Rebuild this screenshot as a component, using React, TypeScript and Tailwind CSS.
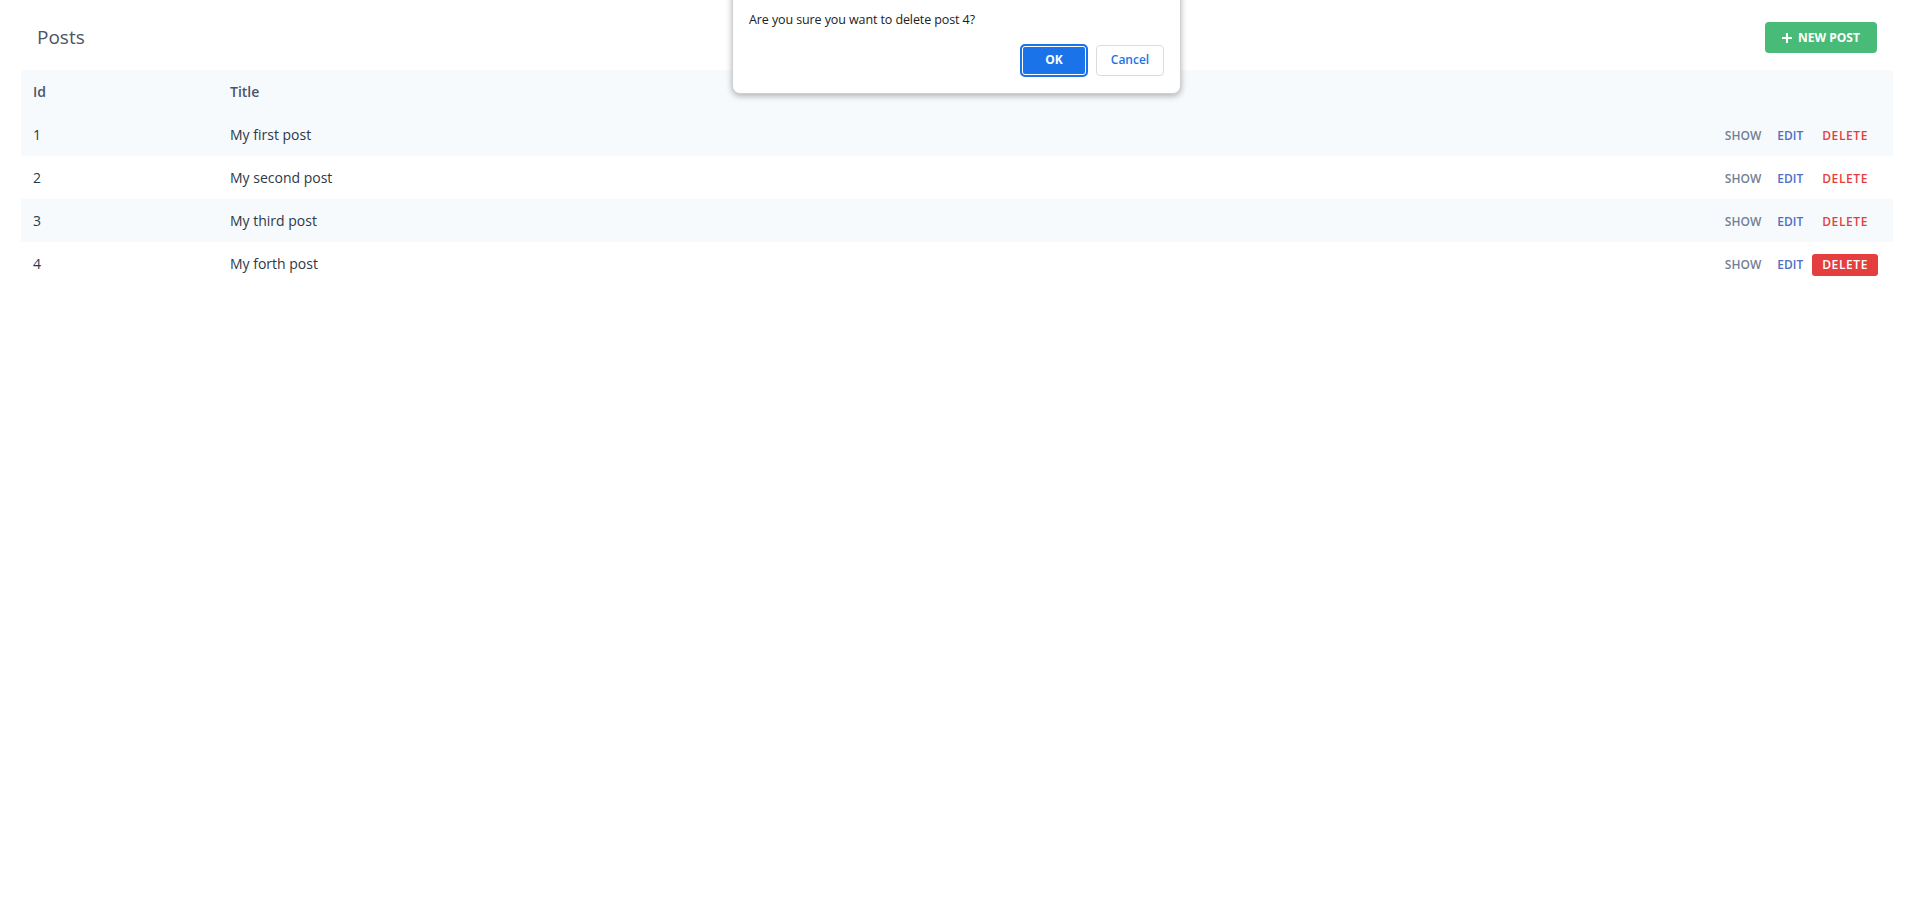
import React from "react";

const posts = [
  { id: 1, title: "My first post" },
  { id: 2, title: "My second post" },
  { id: 3, title: "My third post" },
  { id: 4, title: "My forth post" },
];

const App: React.FC = () => {
  return (
    <div
      className="relative min-h-screen bg-white px-[21px]"
      style={{ fontFamily: '"Open Sans", "Noto Sans", sans-serif' }}
    >
      {/* Header */}
      <div className="flex items-center justify-between px-4 pt-[22px] pb-[17px]">
        <h1 className="text-[19px] leading-[31px] text-[#4a5568]">Posts</h1>
        <button className="flex h-[31px] w-[112px] items-center justify-center gap-[6px] rounded bg-[#48bb78] text-[12px] font-bold text-white">
          <svg width="10" height="10" viewBox="0 0 10 10">
            <path d="M5 0v10M0 5h10" stroke="white" strokeWidth="2" />
          </svg>
          NEW POST
        </button>
      </div>

      {/* Table */}
      <table className="w-full border-collapse text-[14px] text-[#2d3748]">
        <thead>
          <tr className="h-[43px] bg-[#f7fafc]">
            <th className="w-[209px] rounded-tl pl-3 text-left font-semibold text-[#4a5568]">Id</th>
            <th className="text-left font-semibold text-[#4a5568]">Title</th>
            <th className="rounded-tr"></th>
          </tr>
        </thead>
        <tbody>
          {posts.map((post, i) => (
            <tr key={post.id} className={`h-[43px] ${i % 2 === 0 ? "bg-[#f7fafc]" : "bg-white"}`}>
              <td className="pl-3">{post.id}</td>
              <td>{post.title}</td>
              <td className="pr-[15px]">
                <div className="mt-[2px] flex items-center justify-end text-[12px] font-semibold">
                  <button className="px-2 py-[2px] text-[#718096]">SHOW</button>
                  <button className="px-2 py-[2px] text-[#4c70c4]">EDIT</button>
                  <button
                    className={`ml-[1px] rounded-[3px] px-[10px] py-[2px] tracking-[0.6px] ${
                      post.id === 4 ? "bg-[#e53e3e] text-white" : "text-[#e53e3e]"
                    }`}
                  >
                    DELETE
                  </button>
                </div>
              </td>
            </tr>
          ))}
        </tbody>
      </table>

      {/* Confirm dialog */}
      <div className="absolute left-[732px] top-[-10px] w-[449px] rounded-b-lg border border-[#d0d0d0] bg-white px-4 pt-[20px] pb-[16px] shadow-[0_2px_6px_rgba(0,0,0,0.3)]">
        <p className="text-[12.5px] tracking-[-0.1px] text-[#202124]">Are you sure you want to delete post 4?</p>
        <div className="mt-[14px] flex justify-end gap-2">
          <button className="flex h-[33px] w-[68px] items-center justify-center rounded-[5px] border-2 border-[#1a73e8] bg-[#1a73e8] text-[12px] font-bold text-white shadow-[inset_0_0_0_1px_white]">
            OK
          </button>
          <button className="mt-[1px] flex h-[31px] w-[68px] items-center justify-center rounded-[4px] border border-[#dadce0] bg-white text-[12px] font-semibold text-[#1a73e8]">
            Cancel
          </button>
        </div>
      </div>
    </div>
  );
};

export default App;
